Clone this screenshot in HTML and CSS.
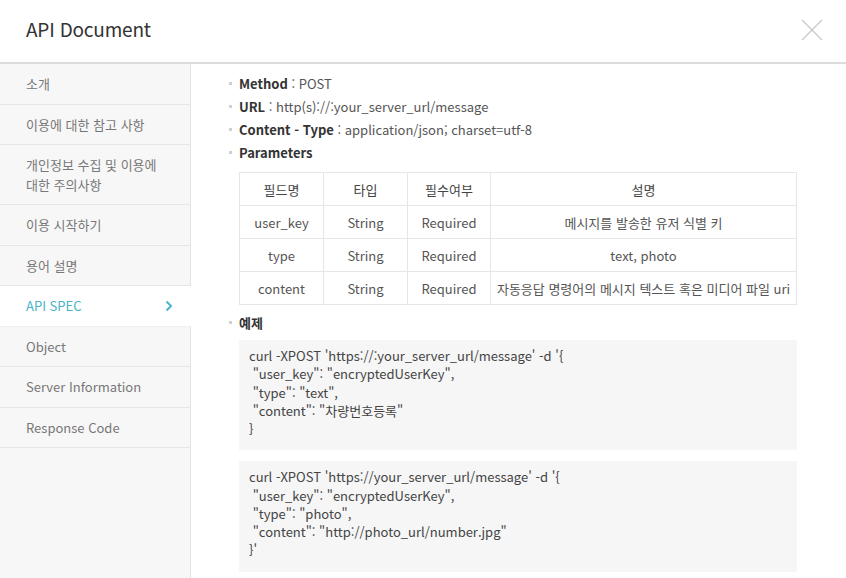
FILE: index.html
```html
<!DOCTYPE html>
<html lang="ko">
<head>
<meta charset="utf-8">
<title>API Document</title>
<link rel="stylesheet" href="styles.css">
</head>
<body>
<div class="modal">
  <header class="header">
    <h1 class="title">API Document</h1>
    <button class="close" aria-label="close">
      <svg width="22" height="22" viewBox="0 0 22 22"><path d="M1 1 L21 21 M21 1 L1 21" stroke="#c8c8c8" stroke-width="1.3" fill="none"/></svg>
    </button>
  </header>
  <div class="body">
    <nav class="side">
      <a class="item">소개</a>
      <a class="item">이용에 대한 참고 사항</a>
      <a class="item">개인정보 수집 및 이용에<br>대한 주의사항</a>
      <a class="item">이용 시작하기</a>
      <a class="item">용어 설명</a>
      <a class="item active">API SPEC<svg class="chev" width="8" height="12" viewBox="0 0 8 12"><path d="M1.5 1.5 L6 6 L1.5 10.5" stroke="#4ab3c9" stroke-width="2" fill="none"/></svg></a>
      <a class="item">Object</a>
      <a class="item">Server Information</a>
      <a class="item">Response Code</a>
    </nav>
    <main class="content">
      <ul class="specs">
        <li><b>Method</b> : POST</li>
        <li><b>URL</b> : http(s)://:your_server_url/message</li>
        <li><b>Content - Type</b> : application/json; charset=utf-8</li>
        <li><b>Parameters</b></li>
      </ul>
      <table class="params">
        <thead>
          <tr><th class="c1">필드명</th><th class="c2">타입</th><th class="c3">필수여부</th><th>설명</th></tr>
        </thead>
        <tbody>
          <tr><td>user_key</td><td>String</td><td>Required</td><td>메시지를 발송한 유저 식별 키</td></tr>
          <tr><td>type</td><td>String</td><td>Required</td><td>text, photo</td></tr>
          <tr><td>content</td><td>String</td><td>Required</td><td>자동응답 명령어의 메시지 텍스트 혹은 미디어 파일 uri</td></tr>
        </tbody>
      </table>
      <ul class="specs ex">
        <li><b>예제</b></li>
      </ul>
      <pre class="code">curl -XPOST 'https://:your_server_url/message' -d '{
 "user_key": "encryptedUserKey",
 "type": "text",
 "content": "차량번호등록"
}</pre>
      <pre class="code">curl -XPOST 'https://your_server_url/message' -d '{
 "user_key": "encryptedUserKey",
 "type": "photo",
 "content": "http://photo_url/number.jpg"
}'</pre>
    </main>
  </div>
</div>
</body>
</html>
```

FILE: styles.css
```css
* { box-sizing: border-box; }
html, body { margin: 0; padding: 0; background: #fff; }
body {
  font-family: "Noto Sans CJK KR", "Noto Sans", sans-serif;
  color: #555;
  width: 846px;
  height: 578px;
  overflow: hidden;
}
.modal { display: flex; flex-direction: column; height: 578px; }
.header {
  height: 64px;
  flex: none;
  display: flex;
  align-items: center;
  justify-content: space-between;
  padding: 0 23px 5px 26px;
  border-bottom: 2px solid #dcdcdc;
}
.title {
  margin: 0;
  font-size: 19px;
  font-weight: 400;
  color: #333;
  letter-spacing: -0.2px;
}
.close {
  border: 0;
  background: none;
  padding: 0;
  width: 22px;
  height: 22px;
  margin-top: 3px;
}
.body { display: flex; flex: 1; min-height: 0; }
.side {
  width: 191px;
  flex: none;
  background: #f7f7f7;
  border-right: 1px solid #e3e3e3;
  display: flex;
  flex-direction: column;
}
.item {
  display: flex;
  align-items: center;
  justify-content: space-between;
  padding: 10px 18px 10px 26px;
  line-height: 19.5px;
  font-size: 13px;
  color: #777;
  border-bottom: 1px solid #e6e6e6;
}
.item.active {
  background: #fff;
  color: #4ab3c9;
  margin-right: -1px;
  border-bottom-color: #f0f0f0;
}
.content { flex: 1; padding: 8px 48px 0 38px; }
.specs {
  list-style: none;
  margin: 0;
  padding: 0;
  font-size: 13px;
  line-height: 23px;
  color: #555;
}
.specs li { position: relative; padding-left: 10px; }
.specs li::before {
  content: "";
  position: absolute;
  left: 0;
  top: 10px;
  width: 3px;
  height: 3px;
  background: #d0d0d0;
}
.specs b { color: #333; font-weight: 700; }
.params {
  margin: 8px 0 0 10px;
  width: 558px;
  table-layout: fixed;
  border-collapse: collapse;
  font-size: 13px;
  color: #555;
}
.params th, .params td {
  border: 1px solid #e6e6e6;
  height: 33px;
  padding: 0 4px;
  text-align: center;
  font-weight: 400;
  white-space: nowrap;
}
.params th { color: #444; }
.c1 { width: 84px; }
.c2 { width: 84px; }
.c3 { width: 83px; }
.ex { margin-top: 6px; }
.code {
  margin: 6px 0 0 10px;
  width: 558px;
  background: #f6f6f6;
  padding: 7px 10px 12px;
  font-family: "Noto Sans CJK KR", "Noto Sans", sans-serif;
  font-size: 13px;
  line-height: 18.25px;
  color: #444;
  white-space: pre;
}
.code + .code { margin-top: 11px; }
```
